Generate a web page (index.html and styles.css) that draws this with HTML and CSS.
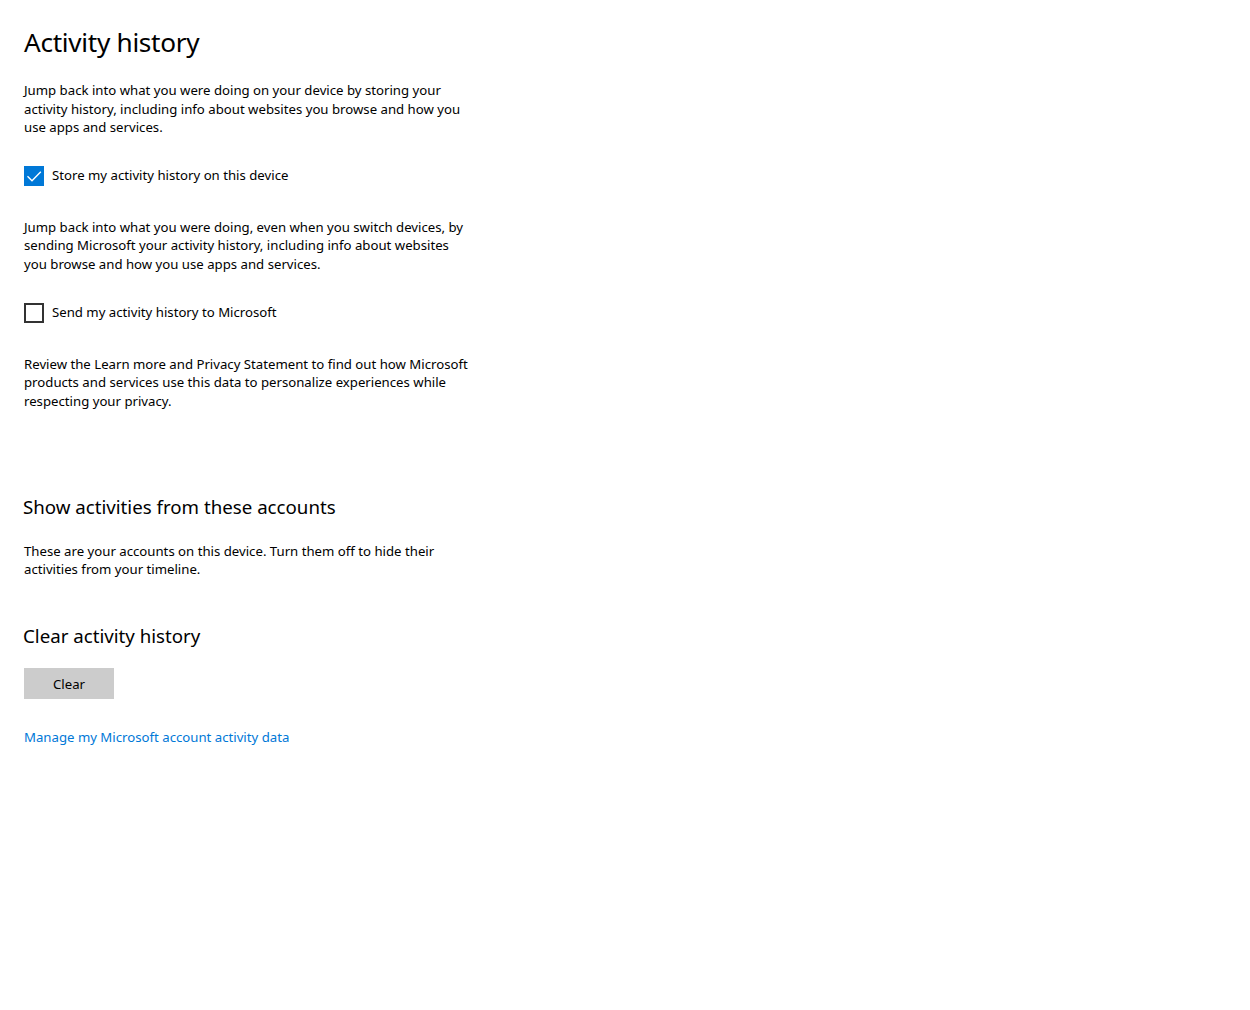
FILE: index.html
```html
<!DOCTYPE html>
<html lang="en">
<head>
<meta charset="utf-8">
<title>Activity history</title>
<link rel="stylesheet" href="styles.css">
</head>
<body>
<main class="page">
  <h1 class="title">Activity history</h1>
  <p class="para p1">Jump back into what you were doing on your device by storing your activity history, including info about websites you browse and how you use apps and services.</p>
  <label class="check c1">
    <span class="box checked">
      <svg width="20" height="20" viewBox="0 0 20 20"><path d="M3.5 10.2 L8 14.7 L16.8 5.8" fill="none" stroke="#fff" stroke-width="1.4"/></svg>
    </span>
    <span class="check-label">Store my activity history on this device</span>
  </label>
  <p class="para p2">Jump back into what you were doing, even when you switch devices, by sending Microsoft your activity history, including info about websites you browse and how you use apps and services.</p>
  <label class="check c2">
    <span class="box"></span>
    <span class="check-label">Send my activity history to Microsoft</span>
  </label>
  <p class="para p3">Review the Learn more and Privacy Statement to find out how Microsoft products and services use this data to personalize experiences while respecting your privacy.</p>
  <h2 class="subhead h-accounts">Show activities from these accounts</h2>
  <p class="para p4">These are your accounts on this device. Turn them off to hide their activities from your timeline.</p>
  <h2 class="subhead h-clear">Clear activity history</h2>
  <button class="btn" type="button">Clear</button>
  <a class="link" href="#">Manage my Microsoft account activity data</a>
</main>
</body>
</html>
```

FILE: styles.css
```css
html, body {
  margin: 0;
  padding: 0;
  background: #ffffff;
}
body {
  font-family: "Noto Sans", "Open Sans", sans-serif;
  color: #000000;
}
.page {
  display: flex;
  flex-direction: column;
  align-items: flex-start;
  padding: 22px 0 0 24px;
  width: 447px;
}
.title {
  margin: 0;
  font-weight: 400;
  font-size: 26.2px;
  line-height: 40px;
  letter-spacing: -0.3px;
}
.para {
  margin: 0;
  font-size: 13.2px;
  line-height: 18.5px;
  width: 447px;
}
.p1 { margin-top: 19px; }
.check {
  display: flex;
  align-items: center;
  gap: 8px;
  height: 20px;
  font-size: 13.2px;
}
.c1 { margin-top: 29.5px; }
.c2 { margin-top: 29.75px; }
.p2 { margin-top: 31.75px; }
.p3 { margin-top: 31.75px; }
.box {
  width: 20px;
  height: 20px;
  box-sizing: border-box;
  border: 2px solid #333333;
  display: block;
}
.box.checked {
  border: none;
  background: #0078d7;
}
.box svg { display: block; }
.check-label { line-height: 18px; margin-bottom: 2px; }
.subhead {
  margin: 0 0 0 -1px;
  font-weight: 400;
  font-size: 18.7px;
  line-height: 28px;
}
.h-accounts { margin-top: 82.75px; }
.p4 { margin-top: 20.75px; }
.h-clear { margin-top: 43.25px; }
.btn {
  margin-top: 18px;
  width: 90px;
  height: 31px;
  border: none;
  background: #cccccc;
  font-family: inherit;
  font-size: 13.2px;
  color: #000;
  padding: 0;
}
.link {
  margin-top: 28.75px;
  font-size: 13.2px;
  line-height: 18.5px;
  color: #0078d7;
  text-decoration: none;
}
```
